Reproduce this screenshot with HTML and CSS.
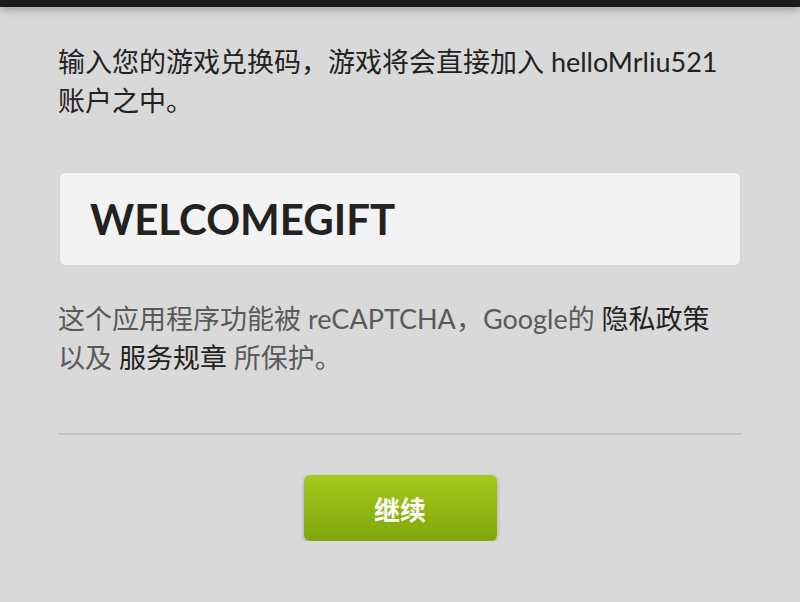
FILE: index.html
```html
<!DOCTYPE html>
<html>
  <head>
    <title>兑换游戏</title>
    <link rel="stylesheet" href="styles.css">
  </head>
  <body>
    <div class="topbar"></div>
    <div class="wrapper">
      <p class="intro">输入您的游戏兑换码，游戏将会直接加入 helloMrliu521<br>账户之中。</p>
      <div class="code-wrap">
        <input type="text" class="code-input" id="code" value="WELCOMEGIFT" />
      </div>
      <p class="notice">
        这个应用程序功能被 reCAPTCHA，Google的 <a href="#">隐私政策</a><br>以及 <a href="#">服务规章</a> 所保护。
      </p>
      <hr class="divider" />
      <div class="actions">
        <button class="button-continue">继续</button>
      </div>
    </div>
  </body>
</html>
```

FILE: styles.css
```css
body {
  background-color: #d9d9d9;
  font-family: "Lato", "Noto Sans CJK SC", sans-serif;
  color: #222222;
  margin: 0;
}

.topbar {
  height: 7px;
  background-color: #1b1b1b;
  box-shadow: 0 2px 8px rgba(0, 0, 0, 0.35);
}

.wrapper {
  padding: 35px 58px 0;
}

.intro {
  font-size: 27px;
  line-height: 39px;
  margin: 0;
}

.code-wrap {
  margin-top: 53px;
  padding: 0 2px;
}

.code-input {
  width: 100%;
  height: 92px;
  box-sizing: border-box;
  padding: 0 30px;
  border: none;
  border-radius: 5px;
  background-color: #f3f3f3;
  box-shadow: 0 0 3px rgba(0, 0, 0, 0.08);
  font-family: "Lato", sans-serif;
  font-weight: bold;
  font-size: 42px;
  color: #222222;
  outline: none;
}

.notice {
  font-size: 27px;
  line-height: 39px;
  color: #5a5a5a;
  margin: 34px 0 0;
}

.notice a {
  color: #222222;
  text-decoration: none;
}

.divider {
  border: none;
  height: 2px;
  background-color: #c1c1c1;
  margin: 56px 0 0;
}

.actions {
  display: flex;
  justify-content: center;
  margin-top: 40px;
}

.button-continue {
  width: 193px;
  height: 66px;
  border: none;
  border-radius: 6px;
  background: linear-gradient(#a4c91b, #80a70b);
  box-shadow: 0 2px 4px rgba(0, 0, 0, 0.25);
  color: #ffffff;
  font-family: "Noto Sans CJK SC", sans-serif;
  font-weight: bold;
  font-size: 26px;
  cursor: pointer;
}
```
